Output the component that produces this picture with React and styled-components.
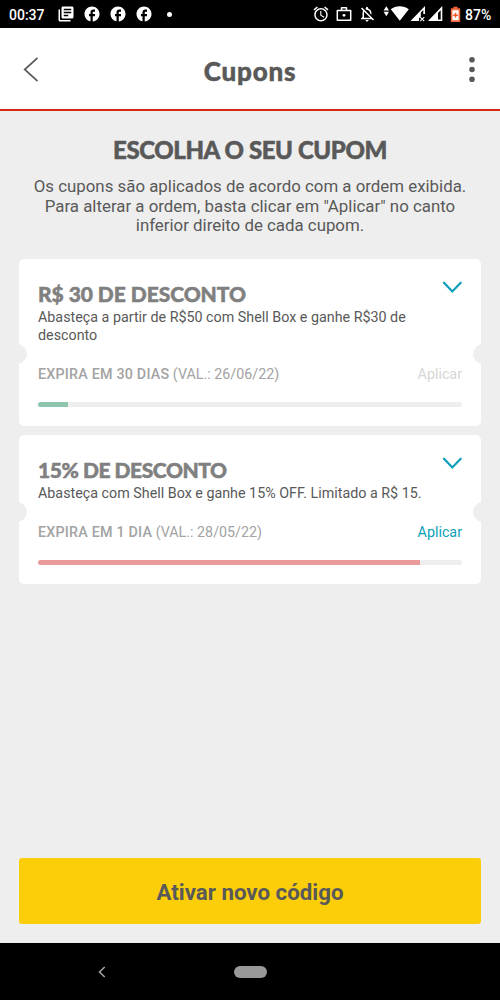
import React from 'react';
import styled, { createGlobalStyle } from 'styled-components';
import {
  MdLibraryBooks,
  MdFacebook,
  MdAlarm,
  MdOutlineNotificationsOff,
} from 'react-icons/md';

const coupons = [
  {
    id: 1,
    title: 'R$ 30 DE DESCONTO',
    body: 'Abasteça a partir de R$50 com Shell Box e ganhe R$30 de desconto',
    expires: 'EXPIRA EM 30 DIAS',
    date: '(VAL.: 26/06/22)',
    progress: 7.1,
    color: '#8dc6ad',
    enabled: false,
    titleSpacing: '-0.05px',
  },
  {
    id: 2,
    title: '15% DE DESCONTO',
    body: 'Abasteça com Shell Box e ganhe 15% OFF. Limitado a R$ 15.',
    expires: 'EXPIRA EM 1 DIA',
    date: '(VAL.: 28/05/22)',
    progress: 90.1,
    color: '#ea9a9b',
    enabled: true,
    titleSpacing: '-0.45px',
  },
];

const StatusIcons = () => (
  <StatusBar>
    <Clock>00:37</Clock>
    <Notifications>
      <MdLibraryBooks size={18} />
      <MdFacebook size={18} />
      <MdFacebook size={18} />
      <MdFacebook size={18} />
      <Dot />
    </Notifications>
    <System>
      <MdAlarm size={18} />
      <svg width="16" height="16" viewBox="0 0 16 16" fill="none" stroke="#fff">
        <path d="M1.3 4.5h13.4v9.7H1.3zM5.5 4.5V1.7h5v2.8" strokeWidth="1.5" strokeLinejoin="round" />
        <circle cx="8" cy="9.3" r="1.4" fill="#fff" stroke="none" />
      </svg>
      <MdOutlineNotificationsOff size={18} />
      <svg width="62" height="18" viewBox="0 0 62 18" fill="#fff">
        <path d="M4.3 1.2l2.7 4.4H1.6zM4.3 11.2L7 6.8H1.6z" />
        <path d="M17.8 15.8L8.8 4.3C13.5.1 22 .1 26.8 4.3z" />
        <path d="M43 1v8h-1.7V5l-2.5 2.6v3.9L37 13.3V16h-8.5z" />
        <path d="M38.2 12.2l4 3.9M42.2 12.2l-4 3.9" stroke="#fff" strokeWidth="1.1" />
        <path fillRule="evenodd" d="M60.3 1v15H46zM58.7 5.2v9.3H56V8z" />
      </svg>
      <svg width="11" height="17" viewBox="0 0 11 17">
        <path d="M3.4.8h4.2v1.5h1.9a.7.7 0 0 1 .7.7v13.1H.8V3a.7.7 0 0 1 .7-.7h1.9z" fill="#f4673d" />
        <path d="M2.4 4.2h6.2v10H2.4z" fill="#fff" />
        <path d="M5.5 6.8v4.8M3.1 9.2h4.8" stroke="#f4562b" strokeWidth="1.5" />
      </svg>
      <Battery>87%</Battery>
    </System>
  </StatusBar>
);

const Coupon = ({ coupon }) => (
  <Card>
    <CardHead>
      <CardTitle $spacing={coupon.titleSpacing}>{coupon.title}</CardTitle>
      <svg width="20" height="13" viewBox="0 0 20 13" fill="none">
        <path d="M2 1.7l8.3 8.8L18.7 1.7" stroke="#0c9fb8" strokeWidth="2.2" strokeLinecap="round" />
      </svg>
    </CardHead>
    <CardBody>{coupon.body}</CardBody>
    <CardInfo>
      <span>
        <strong>{coupon.expires}</strong> {coupon.date}
      </span>
      <Apply disabled={!coupon.enabled}>Aplicar</Apply>
    </CardInfo>
    <Track>
      <Bar $color={coupon.color} style={{ width: `${coupon.progress}%` }} />
    </Track>
  </Card>
);

const App = () => (
  <>
    <GlobalStyle />
    <Screen>
      <StatusIcons />
      <Header>
        <svg width="16" height="26" viewBox="0 0 16 26" fill="none">
          <path d="M14 2.3L1.7 13.5 14 24.7" stroke="#595959" strokeWidth="1.7" strokeLinecap="round" />
        </svg>
        <h1>Cupons</h1>
        <svg width="6" height="26" viewBox="0 0 6 26" fill="#595959">
          <circle cx="3" cy="3.8" r="2.8" />
          <circle cx="3" cy="13.5" r="2.8" />
          <circle cx="3" cy="23.2" r="2.8" />
        </svg>
      </Header>
      <Content>
        <Heading>ESCOLHA O SEU CUPOM</Heading>
        <Intro>
          Os cupons são aplicados de acordo com a ordem exibida.
          <br />
          Para alterar a ordem, basta clicar em "Aplicar" no canto
          <br />
          inferior direito de cada cupom.
        </Intro>
        <List>
          {coupons.map((coupon) => (
            <Coupon key={coupon.id} coupon={coupon} />
          ))}
        </List>
        <MainButton>Ativar novo código</MainButton>
      </Content>
      <NavBar>
        <svg width="8" height="12" viewBox="0 0 8 12" fill="none">
          <path d="M6.7 1L1.5 6l5.2 5" stroke="#a6a6a6" strokeWidth="1.5" />
        </svg>
        <Pill />
      </NavBar>
    </Screen>
  </>
);

const GlobalStyle = createGlobalStyle`
  * {
    box-sizing: border-box;
  }

  body {
    margin: 0;
    font-family: Roboto, 'Liberation Sans', sans-serif;
    color: #595959;
  }

  h1, h2, h3, p {
    margin: 0;
  }

  svg {
    display: block;
    flex-shrink: 0;
  }
`;

const Screen = styled.div`
  display: flex;
  flex-direction: column;
  width: 500px;
  height: 1000px;
  overflow: hidden;
  background-color: #eeeeee;
`;

const StatusBar = styled.div`
  display: flex;
  align-items: center;
  height: 28px;
  padding: 0 9px;
  color: #fff;
  background-color: #000;
`;

const Clock = styled.span`
  width: 47.5px;
  font-size: 14px;
  font-weight: 500;
  line-height: 28px;
  padding-top: 1px;
`;

const Notifications = styled.div`
  display: flex;
  align-items: center;
  gap: 8px;
`;

const Dot = styled.span`
  width: 5px;
  height: 5px;
  margin-left: 6px;
  border-radius: 50%;
  background-color: #fff;
`;

const System = styled.div`
  display: flex;
  align-items: center;
  gap: 6px;
  margin-left: auto;
`;

const Battery = styled.span`
  width: 26px;
  margin-left: -2px;
  font-size: 14px;
  font-weight: 500;
  line-height: 28px;
  padding-top: 1px;
`;

const Header = styled.header`
  display: grid;
  grid-template-columns: 1fr auto 1fr;
  align-items: center;
  height: 83px;
  padding: 0 25px 0 23px;
  background-color: #fff;
  border-bottom: 2px solid #d5280f;

  h1 {
    padding: 5px 0 0 2px;
    font-family: Lato, sans-serif;
    font-size: 26px;
    font-weight: 900;
    line-height: 30px;
    letter-spacing: 0.75px;
    -webkit-text-stroke: 0.5px #595959;
  }

  svg:last-child {
    justify-self: end;
  }
`;

const Content = styled.main`
  display: flex;
  flex: 1;
  flex-direction: column;
  padding: 24px 19px 19px;
`;

const Heading = styled.h2`
  font-family: Lato, sans-serif;
  font-size: 24px;
  font-weight: 900;
  line-height: 30px;
  letter-spacing: -0.4px;
  text-align: center;
  -webkit-text-stroke: 0.5px #595959;
`;

const Intro = styled.p`
  margin-top: 12px;
  font-size: 16.85px;
  line-height: 19.5px;
  text-align: center;
  white-space: nowrap;
`;

const List = styled.div`
  display: flex;
  flex-direction: column;
  gap: 9px;
  margin-top: 23.5px;
`;

const Card = styled.section`
  position: relative;
  padding: 19px;
  border-radius: 5px;
  background-color: #fff;

  /* ticket notches */
  &::before,
  &::after {
    content: '';
    position: absolute;
    bottom: 62px;
    width: 20px;
    height: 20px;
    border-radius: 50%;
    background-color: #eeeeee;
  }

  &::before {
    left: -12px;
  }

  &::after {
    right: -12px;
  }
`;

const CardHead = styled.div`
  display: flex;
  justify-content: space-between;
  height: 31px;

  svg {
    margin-top: 3px;
  }
`;

const CardTitle = styled.h3`
  padding-top: 4px;
  font-family: Lato, sans-serif;
  font-size: 21px;
  font-weight: 900;
  line-height: 24px;
  letter-spacing: ${({ $spacing }) => $spacing};
  color: #808080;
  -webkit-text-stroke: 0.5px #808080;
`;

const CardBody = styled.p`
  width: 400px;
  font-size: 14.3px;
  line-height: 17.5px;
`;

const CardInfo = styled.div`
  display: flex;
  align-items: center;
  justify-content: space-between;
  height: 20px;
  margin-top: 20px;
  font-size: 14.3px;
  color: #a3a3a3;

  strong {
    font-weight: 500;
    letter-spacing: 0.2px;
  }
`;

const Apply = styled.button`
  padding: 0;
  border: 0;
  font: inherit;
  color: #0c9fb8;
  background: none;

  &:disabled {
    color: #d6d6d6;
  }
`;

const Track = styled.div`
  height: 5px;
  margin-top: 17.5px;
  overflow: hidden;
  border-radius: 3px;
  background-color: #eeeeee;
`;

const Bar = styled.div`
  height: 100%;
  background-color: ${({ $color }) => $color};
`;

const MainButton = styled.button`
  height: 66px;
  margin-top: auto;
  padding: 2px 0 0;
  border: 0;
  border-radius: 3px;
  font-family: inherit;
  font-size: 22.3px;
  font-weight: 700;
  color: #595959;
  background-color: #fcce09;
`;

const NavBar = styled.nav`
  display: flex;
  align-items: center;
  height: 57px;
  padding-left: 98px;
  background-color: #000;
`;

const Pill = styled.span`
  width: 33px;
  height: 12px;
  margin-left: 128px;
  border-radius: 6px;
  background-color: #999;
`;

export default App;
